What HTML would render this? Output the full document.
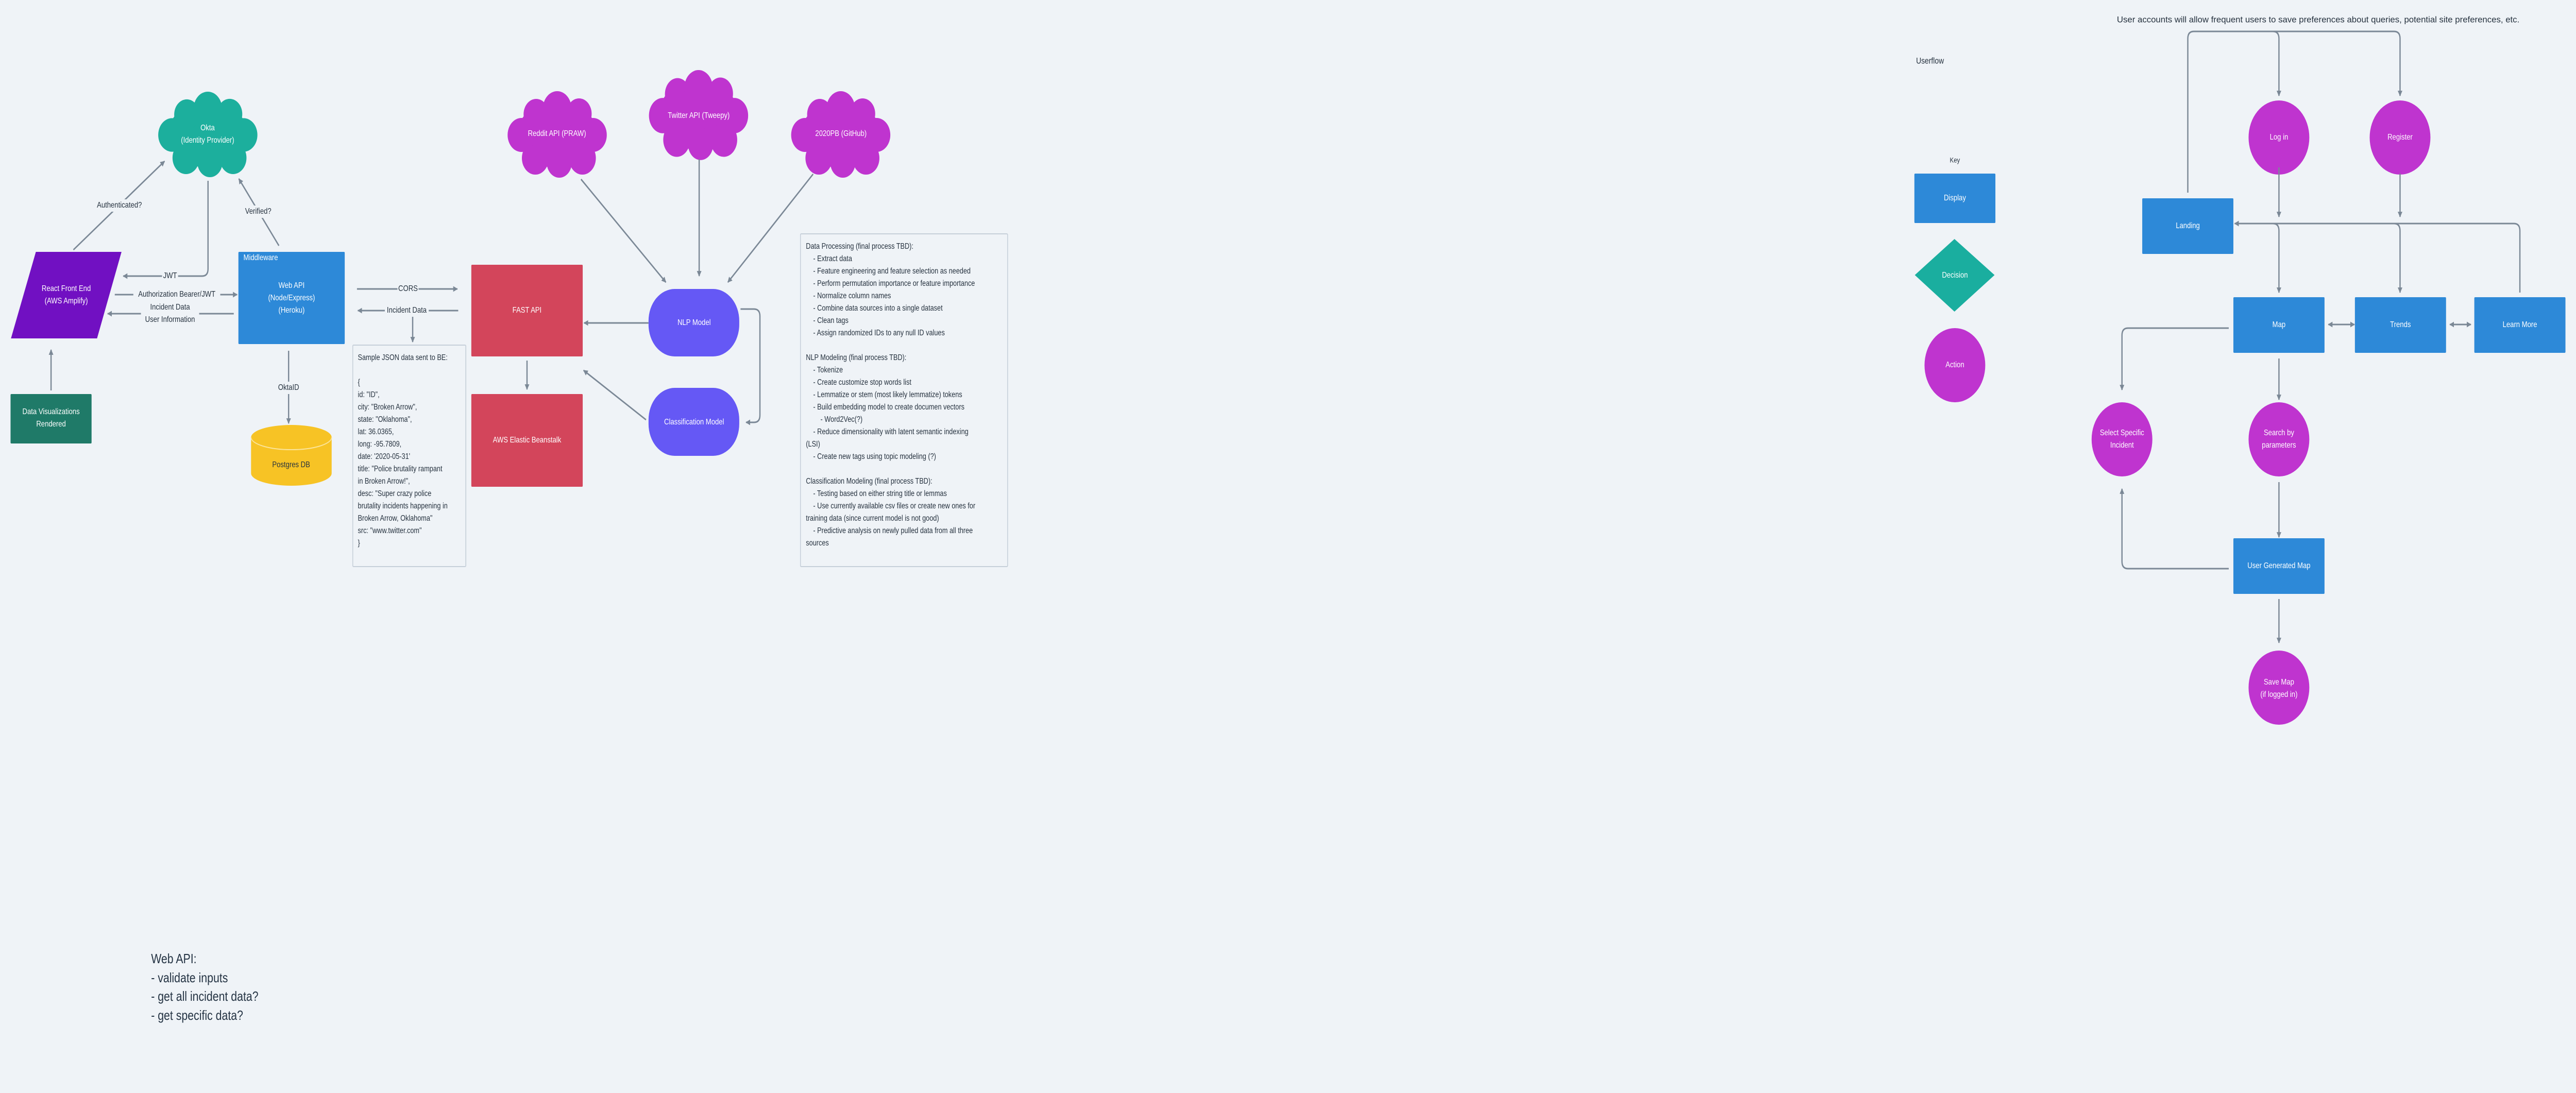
<!DOCTYPE html>
<html><head><meta charset="utf-8"><style>
html,body{margin:0;padding:0;background:#eff3f7;overflow:hidden;width:100%;height:100%;}
body{font-family:"Liberation Sans",sans-serif;}
svg.main{position:absolute;left:0;top:0;width:100vw;height:100vh;display:block;}
.box{width:100%;height:100%;border:2px solid #c6cfd9;border-radius:3px;box-sizing:border-box;color:#26323f;font-family:"Liberation Sans",sans-serif;font-size:15.5px;line-height:24px;white-space:pre;overflow:hidden;}
.note{color:#253444;font-family:"Liberation Sans",sans-serif;font-size:26px;line-height:36.5px;white-space:pre;}
</style></head><body>
<svg class="main" viewBox="0 0 6105 2122" preserveAspectRatio="none" xmlns="http://www.w3.org/2000/svg" font-family="Liberation Sans, sans-serif">
<defs>
<marker id="a" viewBox="0 0 10 10" refX="9" refY="5" markerWidth="11" markerHeight="11" markerUnits="userSpaceOnUse" orient="auto-start-reverse"><path d="M0,0 L10,5 L0,10 z" fill="#7b8896"/></marker>
<g id="cloud">
<ellipse cx="120" cy="84" rx="95" ry="65"/>
<circle cx="70" cy="45" r="30"/><circle cx="120" cy="34" r="34"/><circle cx="172" cy="44" r="30"/>
<circle cx="205" cy="85" r="33"/><circle cx="180" cy="130" r="32"/><circle cx="125" cy="138" r="30"/>
<circle cx="68" cy="130" r="32"/><circle cx="35" cy="85" r="33"/>
</g>
</defs>
<rect x="0" y="0" width="6105" height="2122" fill="#eff3f7"/>
<use href="#cloud" fill="#1caf9d" transform="translate(373,178) scale(0.996,0.988)"/>
<use href="#cloud" fill="#bf34cf" transform="translate(1201,177) scale(0.996,1)"/>
<use href="#cloud" fill="#bf34cf" transform="translate(1536,136) scale(0.996,1.04)"/>
<use href="#cloud" fill="#bf34cf" transform="translate(1873,177) scale(0.996,1)"/>
<g fill="#fff" font-size="16" text-anchor="middle" dominant-baseline="middle">
<text x="492" y="249">Okta</text><text x="492" y="273">(Identity Provider)</text>
<text x="1320" y="260">Reddit API (PRAW)</text>
<text x="1656" y="225">Twitter API (Tweepy)</text>
<text x="1993" y="260">2020PB (GitHub)</text>
</g>
<polygon points="85,489 288,489 230,657 26,657" fill="#7110c2"/>
<rect x="25" y="765" width="192" height="96" rx="2" fill="#1f7a68"/>
<rect x="565" y="489" width="252" height="179" rx="2" fill="#2d89d8"/>
<path d="M595,849 V919 A95.5,24 0 0 0 786,919 V849 A95.5,24 0 0 0 595,849 z" fill="#f7c325"/>
<path d="M595,849 A95.5,24 0 0 0 786,849" fill="none" stroke="#fbe49a" stroke-width="2"/>
<rect x="1117" y="514" width="264" height="178" rx="2" fill="#d3455b"/>
<rect x="1117" y="765" width="264" height="180" rx="2" fill="#d3455b"/>
<rect x="1537" y="561" width="215" height="131" rx="62" fill="#6558f5"/>
<rect x="1537" y="753" width="215" height="132" rx="62" fill="#6558f5"/>
<g fill="#fff" font-size="16" text-anchor="middle" dominant-baseline="middle">
<text x="157" y="561">React Front End</text><text x="157" y="585">(AWS Amplify)</text>
<text x="121" y="800">Data Visualizations</text><text x="121" y="824">Rendered</text>
<text x="577" y="501" text-anchor="start">Middleware</text>
<text x="691" y="555">Web API</text><text x="691" y="579">(Node/Express)</text><text x="691" y="603">(Heroku)</text>
<text x="1249" y="603">FAST API</text><text x="1249" y="855">AWS Elastic Beanstalk</text>
<text x="1645" y="627">NLP Model</text><text x="1645" y="820">Classification Model</text>
</g>
<text x="690" y="903" fill="#26323f" font-size="16" text-anchor="middle" dominant-baseline="middle">Postgres DB</text>
<g fill="none" stroke="#7b8896" stroke-width="3">
<path d="M174,485 L390,313" marker-end="url(#a)"/>
<path d="M493,351 V522 Q493,536 479,536 H292" marker-end="url(#a)"/>
<path d="M272,572 H562" marker-end="url(#a)"/>
<path d="M554,609 H255" marker-end="url(#a)"/>
<path d="M661,477 L566,347" marker-end="url(#a)"/>
<path d="M121,758 V679" marker-end="url(#a)"/>
<path d="M684,681 V822" marker-end="url(#a)"/>
<path d="M846,561 H1084" marker-end="url(#a)"/>
<path d="M1086,603 H848" marker-end="url(#a)"/>
<path d="M978,614 V664" marker-end="url(#a)"/>
<path d="M1377,348 L1578,548" marker-end="url(#a)"/>
<path d="M1657,309 V536" marker-end="url(#a)"/>
<path d="M1927,338 L1725,548" marker-end="url(#a)"/>
<path d="M1537,627 H1384" marker-end="url(#a)"/>
<path d="M1755,600 H1787 Q1801,600 1801,614 V806 Q1801,820 1787,820 H1768" marker-end="url(#a)"/>
<path d="M1531,815 L1383,719" marker-end="url(#a)"/>
<path d="M1249,700 V756" marker-end="url(#a)"/>
</g>
<g fill="#eff3f7">
<rect x="222" y="387" width="122" height="24"/>
<rect x="384" y="524" width="38" height="24"/>
<rect x="316" y="560" width="206" height="24"/>
<rect x="334" y="585" width="138" height="48"/>
<rect x="582" y="399" width="60" height="24"/>
<rect x="660" y="741" width="48" height="24"/>
<rect x="942" y="549" width="50" height="24"/>
<rect x="912" y="591" width="104" height="24"/>
</g>
<g fill="#26323f" font-size="16" text-anchor="middle" dominant-baseline="middle">
<text x="283" y="399">Authenticated?</text>
<text x="403" y="536">JWT</text>
<text x="419" y="572">Authorization Bearer/JWT</text>
<text x="403" y="597">Incident Data</text><text x="403" y="621">User Information</text>
<text x="612" y="411">Verified?</text>
<text x="684" y="753">OktaID</text>
<text x="967" y="561">CORS</text>
<text x="964" y="603">Incident Data</text>
</g>
<g fill="#26323f" dominant-baseline="middle">
<text x="5017" y="39" font-size="17" textLength="954" lengthAdjust="spacingAndGlyphs">User accounts will allow frequent users to save preferences about queries, potential site preferences, etc.</text>
<text x="4541" y="119" font-size="17">Userflow</text>
<text x="4633" y="312" font-size="14" text-anchor="middle">Key</text>
</g>
<g fill="#2d89d8">
<rect x="4537" y="337" width="192" height="96" rx="2"/>
<rect x="5077" y="385" width="216" height="108" rx="2"/>
<rect x="5293" y="577" width="216" height="108" rx="2"/>
<rect x="5581" y="577" width="216" height="108" rx="2"/>
<rect x="5864" y="577" width="216" height="108" rx="2"/>
<rect x="5293" y="1045" width="216" height="108" rx="2"/>
</g>
<polygon points="4632,464 4727,534 4632,605 4538,534" fill="#1aae9f"/>
<g fill="#bf34cf">
<ellipse cx="4633" cy="709" rx="72" ry="72"/>
<ellipse cx="5401" cy="267" rx="72" ry="72"/>
<ellipse cx="5688" cy="267" rx="72" ry="72"/>
<ellipse cx="5029" cy="853" rx="72" ry="72"/>
<ellipse cx="5401" cy="853" rx="72" ry="72"/>
<ellipse cx="5401" cy="1335" rx="72" ry="72"/>
</g>
<g fill="#fff" font-size="16" text-anchor="middle" dominant-baseline="middle">
<text x="4633" y="385">Display</text>
<text x="4633" y="535">Decision</text>
<text x="4633" y="709">Action</text>
<text x="5185" y="439">Landing</text>
<text x="5401" y="267">Log in</text>
<text x="5688" y="267">Register</text>
<text x="5401" y="631">Map</text>
<text x="5689" y="631">Trends</text>
<text x="5972" y="631">Learn More</text>
<text x="5029" y="841">Select Specific</text><text x="5029" y="865">Incident</text>
<text x="5401" y="841">Search by</text><text x="5401" y="865">parameters</text>
<text x="5401" y="1099">User Generated Map</text>
<text x="5401" y="1325">Save Map</text><text x="5401" y="1349">(if logged in)</text>
</g>
<g fill="none" stroke="#7b8896" stroke-width="3">
<path d="M5185,374 V75 Q5185,61 5199,61 H5674 Q5688,61 5688,75 V186" marker-end="url(#a)"/>
<path d="M5387,61 Q5401,61 5401,75 V186" marker-end="url(#a)"/>
<path d="M5401,325 V421" marker-end="url(#a)"/>
<path d="M5688,337 V421" marker-end="url(#a)"/>
<path d="M5972,568 V448 Q5972,434 5958,434 H5296" marker-end="url(#a)"/>
<path d="M5387,434 Q5401,434 5401,448 V568" marker-end="url(#a)"/>
<path d="M5674,434 Q5688,434 5688,448 V568" marker-end="url(#a)"/>
<path d="M5518,630 H5580" marker-start="url(#a)" marker-end="url(#a)"/>
<path d="M5806,630 H5856" marker-start="url(#a)" marker-end="url(#a)"/>
<path d="M5282,637 H5043 Q5029,637 5029,651 V757" marker-end="url(#a)"/>
<path d="M5401,696 V776" marker-end="url(#a)"/>
<path d="M5401,936 V1043" marker-end="url(#a)"/>
<path d="M5282,1104 H5043 Q5029,1104 5029,1090 V949" marker-end="url(#a)"/>
<path d="M5401,1163 V1248" marker-end="url(#a)"/>
</g>
<foreignObject x="835" y="669" width="270" height="432">
<div xmlns="http://www.w3.org/1999/xhtml" class="box" style="padding:12px 0 0 11px;">Sample JSON data sent to BE:

{
id: "ID",
city: "Broken Arrow",
state: "Oklahoma",
lat: 36.0365,
long: -95.7809,
date: '2020-05-31'
title: "Police brutality rampant
in Broken Arrow!",
desc: "Super crazy police
brutality incidents happening in
Broken Arrow, Oklahoma"
src: "www.twitter.com"
}</div>
</foreignObject>
<foreignObject x="1896" y="453" width="493" height="648">
<div xmlns="http://www.w3.org/1999/xhtml" class="box" style="padding:12px 0 0 12px;">Data Processing (final process TBD):
    - Extract data
    - Feature engineering and feature selection as needed
    - Perform permutation importance or feature importance
    - Normalize column names
    - Combine data sources into a single dataset
    - Clean tags
    - Assign randomized IDs to any null ID values

NLP Modeling (final process TBD):
    - Tokenize
    - Create customize stop words list
    - Lemmatize or stem (most likely lemmatize) tokens
    - Build embedding model to create documen vectors
        - Word2Vec(?)
    - Reduce dimensionality with latent semantic indexing
(LSI)
    - Create new tags using topic modeling (?)

Classification Modeling (final process TBD):
    - Testing based on either string title or lemmas
    - Use currently available csv files or create new ones for
training data (since current model is not good)
    - Predictive analysis on newly pulled data from all three
sources</div>
</foreignObject>
<foreignObject x="358" y="1843" width="600" height="160">
<div xmlns="http://www.w3.org/1999/xhtml" class="note">Web API:
- validate inputs
- get all incident data?
- get specific data?</div>
</foreignObject>
</svg>
</body></html>
